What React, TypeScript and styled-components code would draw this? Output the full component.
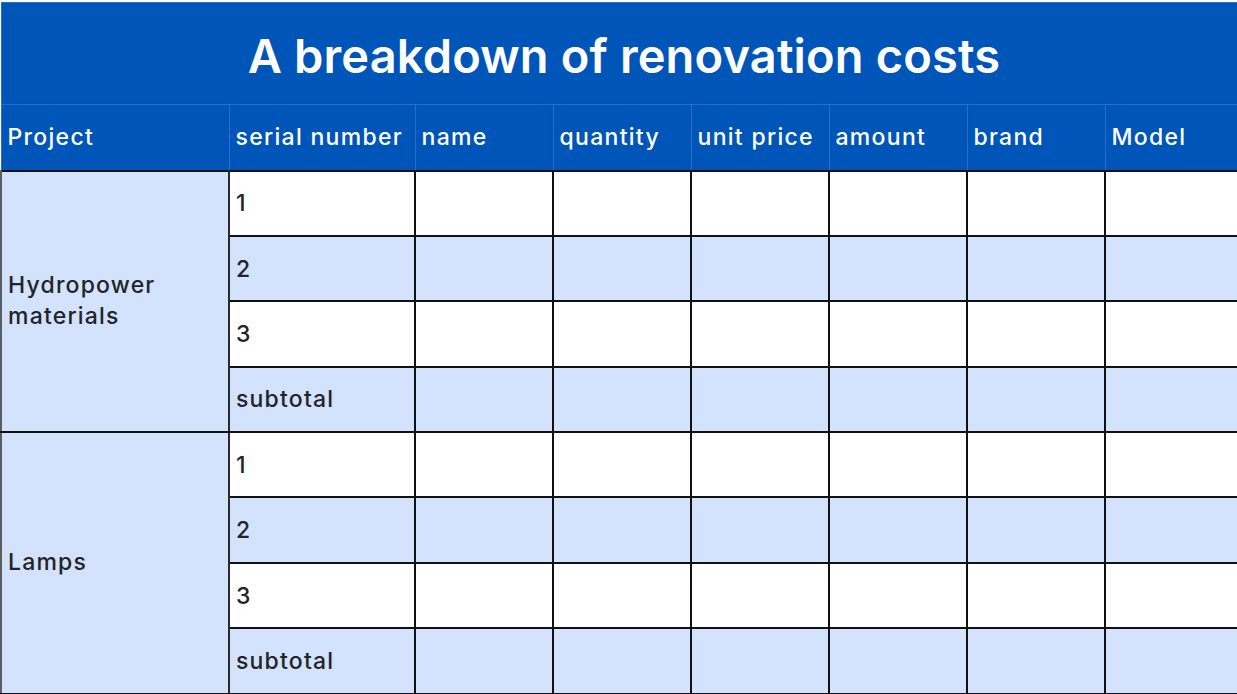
import React from 'react';
import styled, { createGlobalStyle } from 'styled-components';

const GlobalStyle = createGlobalStyle`
  html, body {
    margin: 0;
    padding: 0;
    background: #ffffff;
    overflow: hidden;
  }
  body {
    font-family: Inter, "Noto Sans", "Liberation Sans", sans-serif;
  }
`;

const Page = styled.div`
  width: 1237px;
  height: 694px;
  overflow: hidden;
  padding-top: 2px;
  box-sizing: border-box;
`;

const Sheet = styled.table`
  border-collapse: collapse;
  table-layout: fixed;
  width: 1242px;
`;

const TitleCell = styled.th`
  height: 102px;
  padding: 3px 0 0 4px;
  background: #0055b8;
  color: #ffffff;
  font-size: 47px;
  font-weight: 600;
  letter-spacing: 0.15px;
  text-align: center;
  border: 1px solid #2a6cc6;
  box-sizing: border-box;
`;

const HeadCell = styled.th`
  height: 66px;
  padding: 0 5px 0 6px;
  background: #0055b8;
  color: #ffffff;
  font-size: 23px;
  font-weight: 500;
  letter-spacing: 1.3px;
  text-align: left;
  white-space: nowrap;
  overflow: hidden;
  border: 1px solid #2a6cc6;
  box-sizing: border-box;
`;

const Cell = styled.td<{ $shade?: boolean }>`
  height: 65.4px;
  padding: 0 6px;
  background: ${(p) => (p.$shade ? '#d3e2fd' : '#ffffff')};
  color: #222428;
  font-size: 23px;
  font-weight: 500;
  letter-spacing: 1.2px;
  text-align: left;
  vertical-align: middle;
  border: 2px solid #111111;
  box-sizing: border-box;
`;

const GroupCell = styled(Cell)`
  background: #d3e2fd;
  line-height: 31px;
  border-left: 2px solid #5a5d63;
  border-right: 2px solid #2a2a2a;
`;

const columns = [
  { label: 'Project', width: 228 },
  { label: 'serial number', width: 186 },
  { label: 'name', width: 138 },
  { label: 'quantity', width: 138 },
  { label: 'unit price', width: 138 },
  { label: 'amount', width: 138 },
  { label: 'brand', width: 138 },
  { label: 'Model', width: 138 },
];

const groups = ['Hydropower materials', 'Lamps'];
const rows = ['1', '2', '3', 'subtotal'];

export default function App() {
  return (
    <Page>
      <GlobalStyle />
      <Sheet>
        <colgroup>
          {columns.map((c) => (
            <col key={c.label} style={{ width: c.width }} />
          ))}
        </colgroup>
        <thead>
          <tr>
            <TitleCell colSpan={columns.length}>A breakdown of renovation costs</TitleCell>
          </tr>
          <tr>
            {columns.map((c) => (
              <HeadCell key={c.label}>{c.label}</HeadCell>
            ))}
          </tr>
        </thead>
        <tbody>
          {groups.map((g) =>
            rows.map((r, i) => {
              const shade = i % 2 === 1;
              return (
                <tr key={g + r}>
                  {i === 0 && <GroupCell rowSpan={rows.length}>{g}</GroupCell>}
                  <Cell $shade={shade}>{r}</Cell>
                  {columns.slice(2).map((c) => (
                    <Cell key={c.label} $shade={shade} />
                  ))}
                </tr>
              );
            })
          )}
        </tbody>
      </Sheet>
    </Page>
  );
}
